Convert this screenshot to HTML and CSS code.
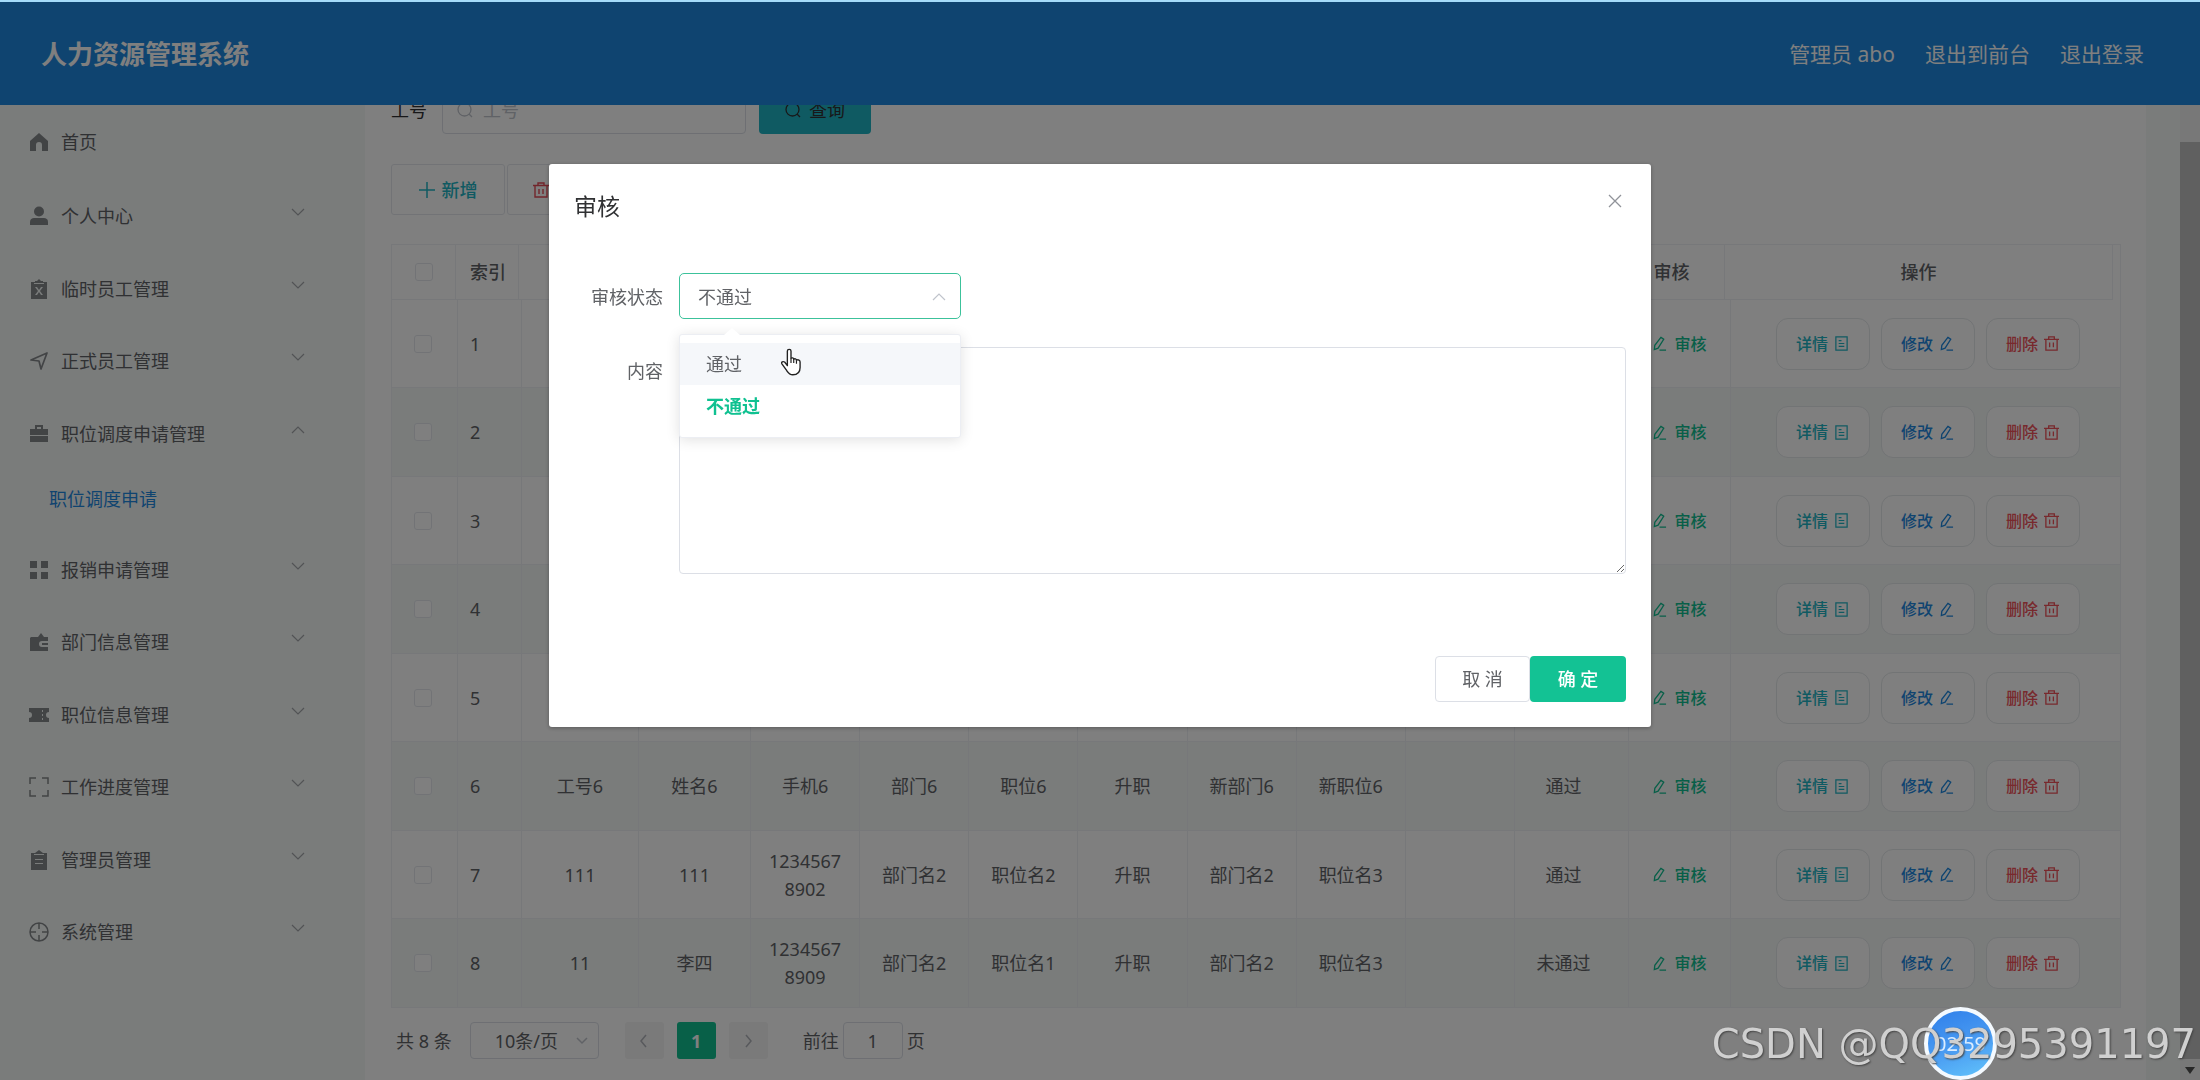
FILE: index.html
```html
<!DOCTYPE html>
<html lang="zh-CN">
<head>
<meta charset="utf-8">
<title>人力资源管理系统</title>
<link rel="stylesheet" href="styles.css">
</head>
<body>
<svg class="sprite" aria-hidden="true">
  <symbol id="i-home" viewBox="0 0 20 20"><path d="M10 1 1 9v10h6v-6a3 3 0 0 1 6 0v6h6V9z"/></symbol>
  <symbol id="i-user" viewBox="0 0 20 20"><circle cx="10" cy="5.500" r="5"/><path d="M1 19v-3c0-3 2-4 4-4h10c2 0 4 1 4 4v3z"/></symbol>
  <symbol id="i-clip-x" viewBox="0 0 20 20"><path fill-rule="evenodd" d="M2 3h4V2h2l2-2 2 2h2v1h4v17H2zM5 4v1h10V4zM6 8l3 4-3 4h2l2-3 2 3h2l-3-4 3-4h-2l-2 3-2-3z"/></symbol>
  <symbol id="i-send" viewBox="0 0 20 20"><path fill="none" stroke="currentColor" stroke-width="1.700" stroke-linejoin="round" d="M2 9 18 2 12 18 10 10z"/></symbol>
  <symbol id="i-case" viewBox="0 0 20 20"><path fill-rule="evenodd" d="M6 5V1h8v4h5v6H1V5zM8 3v2h4V3zM1 12h18v6H1z"/></symbol>
  <symbol id="i-grid" viewBox="0 0 20 20"><path d="M1 1h7v7H1zM12 1h7v7h-7zM1 12h7v7H1zM12 12h7v7h-7z"/></symbol>
  <symbol id="i-wallet" viewBox="0 0 20 20"><path fill-rule="evenodd" d="M2 5h7l3-4 3 4h4v4h-6a3 3 0 0 0 0 6h6v4H1V6zM13 11h6v2h-6z"/></symbol>
  <symbol id="i-ticket" viewBox="0 0 20 20"><path fill-rule="evenodd" d="M0 3h20v4a3 3 0 0 0 0 6v4H0v-4a3 3 0 0 0 0-6zM13 5v2h1V5zM13 9v2h1V9zM13 13v2h1v-2z"/></symbol>
  <symbol id="i-frame" viewBox="0 0 20 20"><path fill="none" stroke="currentColor" stroke-width="1.500" d="M1 7V1h6M13 1h6v6M19 13v6h-6M7 19H1v-6"/></symbol>
  <symbol id="i-clip" viewBox="0 0 20 20"><path fill-rule="evenodd" d="M2 3h4l4-3 4 3h4v17H2zM5 4v1h10V4zM6 9v1h8V9zM6 13v1h8v-1z"/></symbol>
  <symbol id="i-aim" viewBox="0 0 20 20"><path fill="none" stroke="currentColor" stroke-width="1.500" d="M10 1a9 9 0 1 0 0 18a9 9 0 1 0 0-18M10 1v6M10 13v6M1 10h6M13 10h6"/></symbol>
  <symbol id="i-down" viewBox="0 0 14 14"><path fill="none" stroke="currentColor" stroke-width="1.200" d="M1 4l6 6 6-6"/></symbol>
  <symbol id="i-up" viewBox="0 0 14 14"><path fill="none" stroke="currentColor" stroke-width="1.200" d="M1 10l6-6 6 6"/></symbol>
  <symbol id="i-left" viewBox="0 0 14 14"><path fill="none" stroke="currentColor" stroke-width="1.500" d="M9 1L4 7l5 6"/></symbol>
  <symbol id="i-right" viewBox="0 0 14 14"><path fill="none" stroke="currentColor" stroke-width="1.500" d="M5 1l5 6-5 6"/></symbol>
  <symbol id="i-search" viewBox="0 0 16 16"><path fill="none" stroke="currentColor" stroke-width="1.300" d="M7.500 1a6.500 6.500 0 1 0 0 13a6.500 6.500 0 1 0 0-13M12 12l3 3"/></symbol>
  <symbol id="i-plus" viewBox="0 0 16 16"><path fill="none" stroke="currentColor" stroke-width="1.500" d="M8 0v16M0 8h16"/></symbol>
  <symbol id="i-trash" viewBox="0 0 16 16"><path fill="none" stroke="currentColor" stroke-width="1.400" d="M0 3.500h16M5 3V1h6v2M2 4v11h12V4M6 7v5M10 7v5"/></symbol>
  <symbol id="i-doc" viewBox="0 0 16 16"><path fill="none" stroke="currentColor" stroke-width="1.300" d="M2 1h12v14H2zM5 5h3M5 8h6M5 11h6"/></symbol>
  <symbol id="i-edit" viewBox="0 0 16 16"><path fill="none" stroke="currentColor" stroke-width="1.400" d="M9.500 1.500l3 2-6 9.500-4 1.500.5-4.500zM8 15h7"/></symbol>
  <symbol id="i-close" viewBox="0 0 14 14"><path fill="none" stroke="currentColor" stroke-width="1.300" d="M1 1l12 12M13 1L1 13"/></symbol>
</svg>

<div class="app">
  <header class="topbar">
    <h1 class="brand">人力资源管理系统</h1>
    <nav class="account">
      <span>管理员 abo</span>
      <a href="#">退出到前台</a>
      <a href="#">退出登录</a>
    </nav>
  </header>

  <div class="body">
    <nav class="sidebar">
      <a class="item" href="#"><svg class="ico"><use href="#i-home"/></svg>首页</a>
      <a class="item" href="#"><svg class="ico"><use href="#i-user"/></svg>个人中心<svg class="chev"><use href="#i-down"/></svg></a>
      <a class="item" href="#"><svg class="ico"><use href="#i-clip-x"/></svg>临时员工管理<svg class="chev"><use href="#i-down"/></svg></a>
      <a class="item" href="#"><svg class="ico"><use href="#i-send"/></svg>正式员工管理<svg class="chev"><use href="#i-down"/></svg></a>
      <a class="item" href="#"><svg class="ico"><use href="#i-case"/></svg>职位调度申请管理<svg class="chev"><use href="#i-up"/></svg></a>
      <a class="subitem" href="#">职位调度申请</a>
      <a class="item" href="#"><svg class="ico"><use href="#i-grid"/></svg>报销申请管理<svg class="chev"><use href="#i-down"/></svg></a>
      <a class="item" href="#"><svg class="ico"><use href="#i-wallet"/></svg>部门信息管理<svg class="chev"><use href="#i-down"/></svg></a>
      <a class="item" href="#"><svg class="ico"><use href="#i-ticket"/></svg>职位信息管理<svg class="chev"><use href="#i-down"/></svg></a>
      <a class="item" href="#"><svg class="ico"><use href="#i-frame"/></svg>工作进度管理<svg class="chev"><use href="#i-down"/></svg></a>
      <a class="item" href="#"><svg class="ico"><use href="#i-clip"/></svg>管理员管理<svg class="chev"><use href="#i-down"/></svg></a>
      <a class="item" href="#"><svg class="ico"><use href="#i-aim"/></svg>系统管理<svg class="chev"><use href="#i-down"/></svg></a>
    </nav>

    <main class="main">
      <form class="search">
        <label for="jobno">工号</label>
        <div class="field"><svg><use href="#i-search"/></svg><input id="jobno" type="text" placeholder="工号"></div>
        <button class="query" type="button"><svg><use href="#i-search"/></svg>查询</button>
      </form>

      <div class="tools">
        <button class="add" type="button"><svg><use href="#i-plus"/></svg>新增</button>
        <button class="del" type="button" aria-label="删除"><svg><use href="#i-trash"/></svg></button>
      </div>

      <div class="grid">
        <table class="head">
          <colgroup><col class="h-check"><col class="h-index"><col><col class="h-audit"><col class="h-ops"></colgroup>
          <thead><tr><th><input type="checkbox" aria-label="全选"></th><th class="idx">索引</th><th></th><th>审核</th><th>操作</th></tr></thead>
        </table>
        <table class="rows">
          <colgroup><col class="c-check"><col class="c-index"><col class="c-no"><col class="c-name"><col><col><col><col><col><col><col><col class="c-state"><col class="c-audit"><col class="c-ops"></colgroup>
          <tbody id="rows"></tbody>
        </table>
      </div>

      <div class="pager">
        <span>共 8 条</span>
        <select class="size" aria-label="每页条数"><option>10条/页</option></select>
        <div class="pages">
          <button type="button" aria-label="上一页"><svg><use href="#i-left"/></svg></button>
          <button class="current" type="button">1</button>
          <button type="button" aria-label="下一页"><svg><use href="#i-right"/></svg></button>
        </div>
        <label class="jump">前往<input type="text" value="1">页</label>
      </div>
    </main>
    <div class="scroll"><div class="thumb"></div><div class="down"></div></div>
  </div>
</div>

<div class="mask">
  <section class="dialog" role="dialog" aria-label="审核">
    <header class="dialog-head">
      <h2>审核</h2>
      <button type="button" aria-label="关闭"><svg><use href="#i-close"/></svg></button>
    </header>
    <div class="line">
      <label for="state">审核状态</label>
      <div class="picker">
        <select id="state"><option>不通过</option><option>通过</option></select>
        <svg class="caret"><use href="#i-up"/></svg>
        <ul class="menu">
          <li class="hover">通过</li>
          <li class="chosen">不通过</li>
        </ul>
        <svg class="pointer" viewBox="0 0 22 30"><path fill="#fff" stroke="#222" stroke-width="1.500" stroke-linejoin="round" d="M7 19V3c0-2.500 4-2.500 4 0v8c1-1 3-.7 3 1 1-1 3-.6 3 1 2-1 4 0 4 2v6c0 5-3 8-8 8-4 0-5-2-7-5l-5-7c-1-2 1-3 3-2z"/><path stroke="#222" stroke-width="1.300" d="M11 11v5M14 12v4M17 13v4"/></svg>
      </div>
    </div>
    <div class="line">
      <label for="content">内容</label>
      <textarea id="content"></textarea>
    </div>
    <footer class="dialog-foot">
      <button class="cancel" type="button">取 消</button>
      <button class="ok" type="button">确 定</button>
    </footer>
  </section>
</div>

<div class="clock">02:59</div>
<div class="watermark">CSDN @QQ3295391197</div>
<script src="rows.js"></script>
</body>
</html>
```
FILE: rows.js
```js
const blank = ['', '', '', '', '', '', '', '', '', ''];
const data = [
  blank, blank, blank, blank, blank,
  ['工号6', '姓名6', '手机6', '部门6', '职位6', '升职', '新部门6', '新职位6', '', '通过'],
  ['111', '111', '12345678902', '部门名2', '职位名2', '升职', '部门名2', '职位名3', '', '通过'],
  ['11', '李四', '12345678909', '部门名2', '职位名1', '升职', '部门名2', '职位名3', '', '未通过']
];
const icon = name => `<svg><use href="#i-${name}"/></svg>`;
document.getElementById('rows').innerHTML = data.map((cells, i) => `
  <tr>
    <td class="pick"><input type="checkbox" aria-label="选择第${i + 1}行"></td>
    <td class="idx">${i + 1}</td>
    ${cells.map((c, n) => `<td${n === 9 ? ' class="state"' : ''}>${c}</td>`).join('')}
    <td><button class="audit" type="button">${icon('edit')}审核</button></td>
    <td><div class="ops">
      <button class="view" type="button">详情${icon('doc')}</button>
      <button class="edit" type="button">修改${icon('edit')}</button>
      <button class="drop" type="button">删除${icon('trash')}</button>
    </div></td>
  </tr>`).join('');
```
FILE: styles.css
```css
* { box-sizing: border-box; }
body {
  margin: 0;
  overflow: hidden;
  font-family: "Noto Sans", "Noto Sans CJK SC", sans-serif;
  font-size: 18px;
  line-height: 28px;
  color: #606266;
  background: #fff;
}
button, input, select, textarea { font: inherit; color: inherit; margin: 0; }
button { display: flex; align-items: center; justify-content: center; padding: 0; border: 0; background: none; white-space: nowrap; }
a { color: inherit; text-decoration: none; }
svg { flex: none; fill: currentColor; }
.sprite { display: none; }

.app { display: flex; flex-direction: column; height: 100vh; }
.topbar {
  flex: none;
  display: flex;
  align-items: center;
  justify-content: space-between;
  height: 105px;
  padding: 2px 56px 0 41px;
  color: #fff;
  background: #1e88e0;
}
.brand { margin: 0; font-size: 26px; line-height: 36px; }
.account { display: flex; gap: 30px; font-size: 21px; line-height: 30px; }
.body { flex: 1; display: flex; min-height: 0; }

.sidebar { flex: none; width: 365px; background: #f4f8f7; }
.item { display: flex; align-items: center; height: 72px; padding: 0 60px 0 29px; }
.item:nth-child(odd) { height: 73px; }
.item:first-child { height: 75px; padding-bottom: 2px; }
.ico { width: 20px; height: 20px; margin-right: 12px; color: #85888b; }
.chev { width: 14px; height: 14px; margin: 0 0 8px auto; color: #a4a7ab; }
.subitem { display: flex; align-items: center; height: 63px; padding: 0 0 6px 49px; color: #1e88e0; }

.main { flex: 1; min-width: 0; overflow: hidden; padding: 0 59px 0 26px; background: linear-gradient(to left, #f4f8f7 34px, #fff 34px); }
.search { display: flex; align-items: center; height: 46px; margin-top: -17px; color: #303133; }
.search label { padding-bottom: 2px; }
.field { display: flex; align-items: center; width: 304px; height: 46px; margin: 0 13px 0 15px; padding: 0 0 2px 14px; gap: 10px; border: 1px solid #dcdfe6; border-radius: 4px; color: #c0c4cc; }
.field svg, .query svg { width: 16px; height: 16px; }
.field input { width: 200px; border: 0; padding: 0; background: none; outline: 0; }
.field input::placeholder { color: #c0c4cc; }
.query { width: 112px; height: 46px; padding-bottom: 2px; gap: 8px; border-radius: 4px; background: #1fb4c4; }

.tools { display: flex; gap: 2px; margin-top: 30px; }
.tools button { width: 114px; height: 51px; gap: 7px; border: 1px solid #e4e7ed; border-radius: 3px; }
.tools svg { width: 16px; height: 16px; }
.add { color: #1fb4c4; font-weight: 500; }
.tools .del { justify-content: flex-start; padding-left: 25px; color: #e54b57; }

.grid { margin-top: 29px; border: solid #eef0f5; border-width: 1px 1px 0; }
table { table-layout: fixed; border-collapse: separate; border-spacing: 0; width: 100%; }
.head { width: calc(100% - 7px); }
.h-check { width: 64px; }
.h-index { width: 63px; }
.h-audit { width: 106px; }
.h-ops { width: 388px; }
.c-check { width: 66px; }
.c-index { width: 64px; }
.c-no { width: 117px; }
.c-name { width: 112px; }
.c-state { width: 114px; }
.c-audit { width: 102px; }
.c-ops { width: 389px; }
th, td { padding: 0 14px; border: solid #eef0f5; border-width: 0 1px 1px 0; text-align: center; vertical-align: middle; word-break: break-all; }
th { height: 55px; font-weight: 500; color: #606266; white-space: nowrap; }
td { height: 88px; }
.idx { text-align: left; }
td.idx { padding-left: 12px; }
.pick { padding: 0 16px 0 12px; }
.state { padding: 0 30px 0 14px; }
.rows tr:nth-child(even) td { height: 89px; background: #f4f8f7; }
.rows td:last-child { padding: 0 10px 0 14px; border-right: 0; }
input[type="checkbox"] { appearance: none; display: block; width: 18px; height: 18px; margin: 0 auto; border: 1px solid #e4e7ed; border-radius: 3px; background: #fff; }
.audit { gap: 7px; margin: 0 auto; font-size: 16px; font-weight: 500; color: #11bf91; }
.audit svg, .ops svg { width: 15px; height: 15px; }
.ops { display: flex; justify-content: center; gap: 11px; }
.ops button { width: 94px; height: 52px; gap: 6px; border: 1px solid #e4e8ea; border-radius: 12px; background: #fff; font-size: 16px; font-weight: 500; }
.ops .view { color: #1fb4c4; }
.ops .edit { color: #1e88e0; }
.ops .drop { color: #f0525a; }

.pager { display: flex; align-items: center; margin-top: 14px; padding-left: 5px; }
.size { appearance: none; width: 129px; height: 37px; margin: 0 26px 0 18px; padding: 0 24px; border: 1px solid #dcdfe6; border-radius: 4px; background: no-repeat right 9px center / 14px 14px url("data:image/svg+xml,%3Csvg xmlns='http://www.w3.org/2000/svg' viewBox='0 0 14 14'%3E%3Cpath d='M2 4l5 5 5-5' fill='none' stroke='%23c0c4cc' stroke-width='1.500'/%3E%3C/svg%3E"); }
.pages { display: flex; gap: 13px; }
.pages button { width: 39px; height: 37px; border-radius: 3px; background: #f4f4f5; color: #b0b3b9; }
.pages svg { width: 14px; height: 14px; }
.pages .current { background: #10c191; color: #fff; font-weight: 700; }
.jump { display: flex; align-items: center; gap: 4px; margin-left: 35px; }
.jump input { width: 60px; height: 37px; padding: 0; border: 1px solid #dcdfe6; border-radius: 4px; text-align: center; background: none; }

.scroll { flex: none; display: flex; flex-direction: column; width: 20px; padding-top: 37px; background: #f1f1f1; }
.thumb { flex: 1; background: #c1c1c1; }
.down { height: 21px; padding: 8px 5px; }
.down::before { content: ""; display: block; border: solid transparent; border-width: 7px 5px 0; border-top-color: #505050; }

.mask { position: fixed; inset: 2px 0 0; padding-top: 162px; background: rgba(0, 0, 0, .5); box-shadow: 0 -2px #a5dcfa; }
.dialog { width: calc(50% + 2px); margin: 0 auto; padding: 26px 25px 25px; border-radius: 3px; background: #fff; box-shadow: 0 1px 4px rgba(0, 0, 0, .3); }
.dialog-head { display: flex; justify-content: space-between; align-items: flex-start; height: 83px; }
.dialog-head h2 { margin: 0; font-size: 23px; font-weight: 400; line-height: 32px; color: #303133; }
.dialog-head button { width: 22px; height: 22px; color: #909399; }
.dialog-head svg { width: 14px; height: 14px; }
.line { display: flex; margin-bottom: 28px; }
.line > label { width: 89px; padding-top: 10px; text-align: right; }
.line > :last-child { margin-left: 16px; }
.picker { position: relative; width: 282px; }
.picker select { appearance: none; display: block; width: 100%; height: 46px; padding: 2px 18px 0; border: 1px solid #3cc29b; border-radius: 5px; background: #fff; }
.caret { position: absolute; right: 15px; top: 17px; width: 14px; height: 14px; color: #c0c4cc; }
.menu { position: absolute; z-index: 1; top: 61px; left: 0; width: 100%; margin: 0; padding: 8px 0 10px; list-style: none; background: #fff; border: 1px solid #eceef3; border-radius: 3px; box-shadow: 0 2px 14px rgba(0, 0, 0, .12); }
.menu::before { content: ""; position: absolute; left: 44px; top: -7px; border: solid transparent; border-width: 0 8px 7px; border-bottom-color: #fff; }
.menu li { height: 42px; padding: 0 26px; line-height: 43px; }
.hover { background: #f5f7fa; }
.chosen { font-weight: 700; color: #10c191; }
.pointer { position: absolute; z-index: 2; left: 102px; top: 75px; width: 20px; height: 28px; }
.line textarea { flex: 1; height: 227px; border: 1px solid #dcdfe6; border-radius: 4px; background: #fff; outline: 0; }
.dialog-foot { display: flex; justify-content: flex-end; margin-top: 82px; }
.dialog-foot button { width: 96px; height: 46px; border-radius: 4px; }
.dialog-foot .cancel { width: 95px; border: 1px solid #dcdfe6; }
.dialog-foot .ok { background: #13c294; color: #fff; font-weight: 500; }

.clock { position: fixed; right: 203px; bottom: 0; width: 73px; height: 73px; border: 4px solid #f4faff; border-radius: 50%; background: linear-gradient(160deg, #2f7fea, #4a9cf2 55%, #62c4fb); color: #d9ecff; font-size: 20px; line-height: 65px; text-align: center; }
.watermark { position: fixed; right: 4px; bottom: 8px; font-family: "DejaVu Sans", sans-serif; font-size: 40px; line-height: 56px; color: #d0d0d0; text-shadow: 1px 1px 2px #444; white-space: nowrap; }
```
